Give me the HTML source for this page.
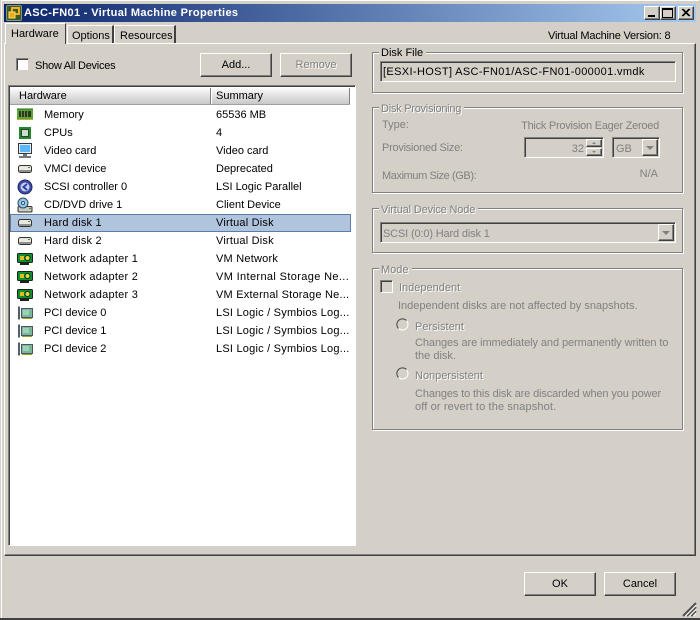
<!DOCTYPE html>
<html><head><meta charset="utf-8"><style>
html,body{margin:0;padding:0;width:700px;height:620px;overflow:hidden;background:#d4d0c8}
body{position:relative;font:11px/14px "Liberation Sans",sans-serif;color:#000}
div,span{position:absolute;box-sizing:border-box;white-space:nowrap}
svg{position:absolute;overflow:visible}
.t{line-height:14px;margin-top:1px}
.g{color:#808080}
.gg{color:#808080;text-shadow:1px 1px 0 #fff}
.btn{background:#d4d0c8;border:1px solid;border-color:#fff #404040 #404040 #fff;box-shadow:inset -1px -1px 0 #808080;text-align:center;line-height:20px}
.sunk{border:1px solid;border-color:#808080 #fff #fff #808080;box-shadow:inset 1px 1px 0 #404040}
.grp{border:1px solid #808080;box-shadow:1px 1px 0 #fff,inset 1px 1px 0 #fff}
.leg{background:#d4d0c8;padding:0 3px 0 2px;top:-6px;left:6px}
.row{left:0;width:340px;height:18px}
.row .a{left:34px;top:2px}.row .b{left:206px;top:2px}
.row svg{left:7px;top:1px}
.n .a{letter-spacing:.25px}.n .b{letter-spacing:.22px}
.p .b{letter-spacing:.22px}
.d .a,.d .b{letter-spacing:.2px}
.tab{background:#d4d0c8;border-top:1px solid #fff;border-left:1px solid #fff;border-right:2px solid #404040;text-align:center}
.arrow{width:0;height:0;border-left:4px solid transparent;border-right:4px solid transparent;border-top:4px solid #808080}
.sm{width:0;height:0;border-left:2px solid transparent;border-right:2px solid transparent}
</style></head><body>
<!-- window frame -->
<div style="left:1px;top:0;width:1px;height:618px;background:#fff"></div>
<div style="left:1px;top:0;width:698px;height:1px;background:#fff"></div>
<div style="left:0;top:618px;width:700px;height:2px;background:#404040"></div>
<!-- title bar -->
<div style="left:4px;top:4px;width:692px;height:18px;background:linear-gradient(90deg,#0a246a,#a6caf0)"></div>
<svg style="left:6px;top:5px" width="16" height="16" viewBox="0 0 16 16"><rect x="0.5" y="0.5" width="15" height="15" rx="1.5" fill="#3c5a28" stroke="#8a9a70"/><rect x="6" y="3" width="7" height="6" fill="none" stroke="#f0b020" stroke-width="2"/><rect x="3" y="7" width="6" height="6" fill="#f0a818" stroke="#ffe070"/></svg>
<div class="t" style="left:24px;top:5px;color:#fff;font-weight:bold;letter-spacing:.33px">ASC-FN01 - Virtual Machine Properties</div>
<div class="btn" style="left:644px;top:6px;width:16px;height:14px"></div>
<div style="left:648px;top:15px;width:7px;height:2px;background:#000"></div>
<div class="btn" style="left:660px;top:6px;width:16px;height:14px"></div>
<div style="left:662px;top:8px;width:11px;height:10px;border:1px solid #000;border-top-width:2px"></div>
<div class="btn" style="left:678px;top:6px;width:16px;height:14px"></div>
<svg style="left:678px;top:6px" width="16" height="14"><path d="M4 3L11 10M5 3L12 10M11 3L4 10M12 3L5 10" stroke="#000" stroke-width="1"/></svg>
<!-- tab panel -->
<div style="left:4px;top:43px;width:692px;height:513px;background:#d4d0c8;border:1px solid;border-color:#fff #404040 #404040 #fff;box-shadow:inset -1px -1px 0 #808080"></div>
<div class="tab" style="left:67px;top:25px;width:47px;height:18px"><span style="left:4px;top:3px">Options</span></div>
<div class="tab" style="left:114px;top:25px;width:62px;height:18px"><span style="left:5px;top:3px">Resources</span></div>
<div class="tab" style="left:5px;top:23px;width:61px;height:21px;border-right:1px solid #404040;z-index:2"><span style="left:5px;top:3px">Hardware</span></div>
<div class="t" style="left:548px;top:28px;letter-spacing:-.2px">Virtual Machine Version: 8</div>
<!-- top controls -->
<div style="left:16px;top:58px;width:13px;height:13px;background:#fff;border:1px solid;border-color:#808080 #d4d0c8 #d4d0c8 #808080;box-shadow:inset 1px 1px 0 #404040"></div>
<div class="t" style="left:35px;top:58px;letter-spacing:-.25px">Show All Devices</div>
<div class="btn" style="left:200px;top:53px;width:72px;height:24px;line-height:23px">Add...</div>
<div class="btn gg" style="left:280px;top:53px;width:72px;height:24px;line-height:23px">Remove</div>
<!-- list -->
<div style="left:8px;top:85px;width:348px;height:461px;background:#fff;border:1px solid;border-color:#808080 #fff #fff #808080;box-shadow:inset 1px 1px 0 #404040">
<div style="left:1px;top:1px;width:340px;height:18px;background:linear-gradient(#fff,#e8e8e8 40%,#c8c8c8);border-bottom:1px solid #a0a0a0"></div>
<div style="left:201px;top:2px;width:2px;height:16px;background:#808080;border-right:1px solid #fff"></div>
<div style="left:340px;top:2px;width:2px;height:16px;background:#808080;border-right:1px solid #fff"></div>
<div class="t" style="left:10px;top:2px">Hardware</div>
<div class="t" style="left:207px;top:2px">Summary</div>
<div style="left:1px;top:20px;width:340px;height:439px">
<div style="left:0;top:108px;width:341px;height:18px;background:#b0c4de;border:1px solid #5a7ea8"></div>

<div class="row" style="top:0"><svg width="16" height="16"><rect y="2" width="16" height="10" fill="#58a838"/><path d="M0 2h16" stroke="#2a6a18"/><rect x="2" y="4" width="12" height="6" fill="#2a3a18"/><path d="M4.500 4v6M7.500 4v6M10.500 4v6" stroke="#6a8a58"/><path d="M0 12.500h16" stroke="#c8a830"/></svg><span class="a">Memory</span><span class="b">65536 MB</span></div>
<div class="row" style="top:18px"><svg width="16" height="16"><rect x="2" y="2" width="12" height="12" fill="#1e8a2a"/><rect x="4.500" y="4.500" width="7" height="7" fill="#d0dcd0" stroke="#304030"/></svg><span class="a">CPUs</span><span class="b">4</span></div>
<div class="row" style="top:36px"><svg width="16" height="16"><rect x="1.500" y="0.500" width="13" height="10" fill="#e8e8f0" stroke="#303848"/><rect x="3" y="2" width="10" height="7" fill="#58b8f8"/><path d="M6 11h4v2H6zM2 13h12v2H2z" fill="#707880"/></svg><span class="a">Video card</span><span class="b">Video card</span></div>
<div class="row" style="top:54px"><svg width="16" height="16"><rect x="1.500" y="4.500" width="13" height="7" rx="2" fill="#e8e8e0" stroke="#303030"/><path d="M2 9h12v2H2z" fill="#909090"/><path d="M11 6.500h2" stroke="#3a9a30"/></svg><span class="a">VMCI device</span><span class="b">Deprecated</span></div>
<div class="row" style="top:72px"><svg width="16" height="16"><circle cx="8" cy="8" r="7" fill="#3a4aa8" stroke="#202860"/><circle cx="8" cy="8" r="4.500" fill="#c8d0f0"/><path d="M10 5L6.500 8L10 11" fill="none" stroke="#3040a0" stroke-width="2"/></svg><span class="a">SCSI controller 0</span><span class="b">LSI Logic Parallel</span></div>
<div class="row" style="top:90px"><svg width="16" height="16"><rect x="1" y="9.500" width="14" height="5.500" rx="1" fill="#c8c8c0" stroke="#303030"/><circle cx="6" cy="6" r="5" fill="#90c8e8" stroke="#304860"/><circle cx="6" cy="6" r="1.500" fill="#fff" stroke="#304860"/><path d="M12 11.500h2" stroke="#3a9a30"/></svg><span class="a">CD/DVD drive 1</span><span class="b">Client Device</span></div>
<div class="row d" style="top:108px"><svg width="16" height="16"><rect x="1.500" y="4.500" width="13" height="7" rx="2" fill="#e8e8e0" stroke="#303030"/><path d="M2 9h12v2H2z" fill="#909090"/><path d="M11 6.500h2" stroke="#3a9a30"/></svg><span class="a">Hard disk 1</span><span class="b">Virtual Disk</span></div>
<div class="row d" style="top:126px"><svg width="16" height="16"><rect x="1.500" y="4.500" width="13" height="7" rx="2" fill="#e8e8e0" stroke="#303030"/><path d="M2 9h12v2H2z" fill="#909090"/><path d="M11 6.500h2" stroke="#3a9a30"/></svg><span class="a">Hard disk 2</span><span class="b">Virtual Disk</span></div>
<div class="row n" style="top:144px"><svg width="16" height="16"><rect x="0.500" y="2.500" width="15" height="9" rx="1" fill="#109030" stroke="#182818"/><rect x="3" y="5" width="4" height="4" fill="#e0c020"/><circle cx="10.500" cy="7" r="2.500" fill="#e8d840" stroke="#103010"/><path d="M3 13h9" stroke="#202020" stroke-width="2"/></svg><span class="a">Network adapter 1</span><span class="b">VM Network</span></div>
<div class="row n" style="top:162px"><svg width="16" height="16"><rect x="0.500" y="2.500" width="15" height="9" rx="1" fill="#109030" stroke="#182818"/><rect x="3" y="5" width="4" height="4" fill="#e0c020"/><circle cx="10.500" cy="7" r="2.500" fill="#e8d840" stroke="#103010"/><path d="M3 13h9" stroke="#202020" stroke-width="2"/></svg><span class="a">Network adapter 2</span><span class="b" style="letter-spacing:.36px">VM Internal Storage Ne...</span></div>
<div class="row n" style="top:180px"><svg width="16" height="16"><rect x="0.500" y="2.500" width="15" height="9" rx="1" fill="#109030" stroke="#182818"/><rect x="3" y="5" width="4" height="4" fill="#e0c020"/><circle cx="10.500" cy="7" r="2.500" fill="#e8d840" stroke="#103010"/><path d="M3 13h9" stroke="#202020" stroke-width="2"/></svg><span class="a">Network adapter 3</span><span class="b">VM External Storage Ne...</span></div>
<div class="row p" style="top:198px"><svg width="16" height="16"><rect x="4.500" y="3.500" width="11" height="9" fill="#78b898" stroke="#485860"/><path d="M2 1.500v13" stroke="#506070" stroke-width="2"/><rect x="6" y="5" width="6" height="5" fill="#a0d0b8"/><path d="M5 13.500h10" stroke="#a0a020"/></svg><span class="a">PCI device 0</span><span class="b">LSI Logic / Symbios Log...</span></div>
<div class="row p" style="top:216px"><svg width="16" height="16"><rect x="4.500" y="3.500" width="11" height="9" fill="#78b898" stroke="#485860"/><path d="M2 1.500v13" stroke="#506070" stroke-width="2"/><rect x="6" y="5" width="6" height="5" fill="#a0d0b8"/><path d="M5 13.500h10" stroke="#a0a020"/></svg><span class="a">PCI device 1</span><span class="b">LSI Logic / Symbios Log...</span></div>
<div class="row p" style="top:234px"><svg width="16" height="16"><rect x="4.500" y="3.500" width="11" height="9" fill="#78b898" stroke="#485860"/><path d="M2 1.500v13" stroke="#506070" stroke-width="2"/><rect x="6" y="5" width="6" height="5" fill="#a0d0b8"/><path d="M5 13.500h10" stroke="#a0a020"/></svg><span class="a">PCI device 2</span><span class="b">LSI Logic / Symbios Log...</span></div>
</div></div>
<!-- Disk File -->
<div class="grp" style="left:372px;top:52px;width:311px;height:41px"><span class="leg" style="color:#000;top:-7px">Disk File</span></div>
<div class="sunk" style="left:380px;top:61px;width:296px;height:21px"><span style="left:2px;top:3px;letter-spacing:.36px">[ESXI-HOST] ASC-FN01/ASC-FN01-000001.vmdk</span></div>
<!-- Disk Provisioning -->
<div class="grp" style="left:372px;top:107px;width:311px;height:86px"><span class="leg gg" style="letter-spacing:-.25px">Disk Provisioning</span></div>
<div class="t g" style="left:382px;top:117px">Type:</div>
<div class="t g" style="right:41px;top:118px;letter-spacing:-.25px">Thick Provision Eager Zeroed</div>
<div class="t g" style="left:382px;top:140px;letter-spacing:-.25px">Provisioned Size:</div>
<div class="sunk" style="left:524px;top:137px;width:80px;height:21px"></div>
<div class="t g" style="right:116px;top:141px">32</div>
<div class="btn" style="left:586px;top:139px;width:16px;height:8px"></div>
<div class="sm" style="left:592px;top:142px;border-bottom:2px solid #808080"></div>
<div class="btn" style="left:586px;top:148px;width:16px;height:8px"></div>
<div class="sm" style="left:592px;top:151px;border-top:2px solid #808080"></div>
<div class="sunk" style="left:612px;top:137px;width:48px;height:21px"></div>
<div class="t g" style="left:616px;top:141px">GB</div>
<div class="btn" style="left:642px;top:139px;width:16px;height:17px"></div>
<div class="arrow" style="left:646px;top:146px"></div>
<div class="t g" style="left:382px;top:168px;letter-spacing:-.4px">Maximum Size (GB):</div>
<div class="t g" style="right:42px;top:166px">N/A</div>
<!-- Virtual Device Node -->
<div class="grp" style="left:372px;top:208px;width:311px;height:45px"><span class="leg gg" style="letter-spacing:-.15px">Virtual Device Node</span></div>
<div class="sunk" style="left:380px;top:222px;width:296px;height:21px"></div>
<div class="t g" style="left:383px;top:226px;letter-spacing:-.15px">SCSI (0:0) Hard disk 1</div>
<div class="btn" style="left:658px;top:224px;width:16px;height:17px"></div>
<div class="arrow" style="left:662px;top:231px"></div>
<!-- Mode -->
<div class="grp" style="left:372px;top:268px;width:311px;height:162px"><span class="leg gg">Mode</span></div>
<div style="left:380px;top:280px;width:13px;height:13px;border:1px solid;border-color:#808080 #fff #fff #808080;box-shadow:inset 1px 1px 0 #404040"></div>
<div class="t gg" style="left:399px;top:280px">Independent</div>
<div class="t g" style="left:398px;top:298px">Independent disks are not affected by snapshots.</div>
<svg style="left:396px;top:318px" width="13" height="13"><circle cx="6.500" cy="6.500" r="5.500" fill="none" stroke="#fff"/><path d="M2.500 10.500A5.500 5.500 0 0 1 10.500 2.500" fill="none" stroke="#404040"/></svg>
<div class="t gg" style="left:415px;top:319px">Persistent</div>
<div class="t g" style="left:415px;top:335px;letter-spacing:-.08px">Changes are immediately and permanently written to</div>
<div class="t g" style="left:415px;top:348px">the disk.</div>
<svg style="left:396px;top:367px" width="13" height="13"><circle cx="6.500" cy="6.500" r="5.500" fill="none" stroke="#fff"/><path d="M2.500 10.500A5.500 5.500 0 0 1 10.500 2.500" fill="none" stroke="#404040"/></svg>
<div class="t gg" style="left:415px;top:368px">Nonpersistent</div>
<div class="t g" style="left:415px;top:386px;letter-spacing:-.12px">Changes to this disk are discarded when you power</div>
<div class="t g" style="left:415px;top:399px;letter-spacing:.13px">off or revert to the snapshot.</div>
<!-- Bottom -->
<div class="btn" style="left:524px;top:572px;width:72px;height:24px;line-height:23px">OK</div>
<div class="btn" style="left:604px;top:572px;width:72px;height:24px;line-height:23px">Cancel</div>
<svg style="left:682px;top:602px" width="14" height="14"><path d="M1 14L14 1M5 14L14 5M9 14L14 9" stroke="#505050" stroke-width="2"/><path d="M3.500 14L14 3.500M7.500 14L14 7.500M11.500 14L14 11.500" stroke="#fff"/></svg>
</body></html>
